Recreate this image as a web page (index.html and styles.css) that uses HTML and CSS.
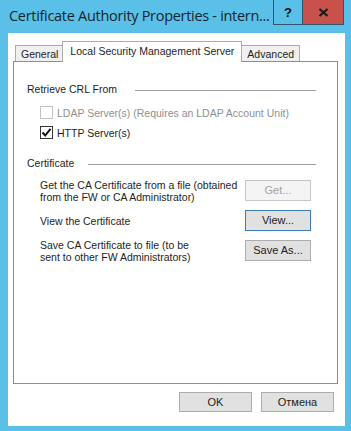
FILE: index.html
```html
<!DOCTYPE html>
<html lang="en">
  <head>
    <meta charset="UTF-8" />
    <title>Certificate Authority Properties</title>
    <link rel="stylesheet" href="styles.css">
  </head>
  <body>
    <div class="window">
      <div class="titlebar">
        <div class="title">Certificate Authority Properties - intern...</div>
        <div class="controls">
          <div class="ctl help">?</div>
          <div class="ctl close">
            <svg width="11" height="9" viewBox="0 0 11 9">
              <path d="M1.5 1 L9.5 8 M9.5 1 L1.5 8" stroke="#1b1b1b" stroke-width="2.2" fill="none" />
            </svg>
          </div>
        </div>
      </div>

      <div class="client">
        <div class="tabs">
          <div class="tab">General</div>
          <div class="tab active">Local Security Management Server</div>
          <div class="tab">Advanced</div>
        </div>
        <div class="panel">
          <div class="legend"><span>Retrieve CRL From</span><i></i></div>
          <div class="check-row disabled">
            <span class="box"></span>
            <span>LDAP Server(s) (Requires an LDAP Account Unit)</span>
          </div>
          <div class="check-row">
            <span class="box">
              <svg width="11" height="11" viewBox="0 0 11 11">
                <path d="M1.5 5.5 L4.2 8.5 L9.5 1.8" stroke="#111" stroke-width="2" fill="none" />
              </svg>
            </span>
            <span>HTTP Server(s)</span>
          </div>

          <div class="legend cert"><span>Certificate</span><i></i></div>
          <div class="cert-row first">
            <div class="cert-text">Get the CA Certificate from a file (obtained<br>from the FW or CA Administrator)</div>
            <button class="btn" disabled>Get...</button>
          </div>
          <div class="cert-row">
            <div class="cert-text">View the Certificate</div>
            <button class="btn default">View...</button>
          </div>
          <div class="cert-row">
            <div class="cert-text">Save CA Certificate to file (to be<br>sent to other FW Administrators)</div>
            <button class="btn">Save As...</button>
          </div>
        </div>
        <div class="footer">
          <button class="btn wide">OK</button>
          <button class="btn wide">Отмена</button>
        </div>
      </div>
    </div>
  </body>
</html>
```

FILE: styles.css
```css
body {
  margin: 0;
  padding: 0;
  background-color: #5bc0e8;
  font-family: "Liberation Sans", Arial, sans-serif;
  font-size: 10.5px;
  color: #1e1e1e;
}

.window {
  width: 351px;
  height: 431px;
  box-sizing: border-box;
  padding: 0 6px 5px 8px;
  display: flex;
  flex-direction: column;
  background-color: #5bc0e8;
}

.titlebar {
  height: 33px;
  display: flex;
  align-items: flex-start;
}

.title {
  flex: 1;
  min-width: 0;
  font-family: "Open Sans", sans-serif;
  font-size: 14.5px;
  color: #17262e;
  padding-top: 6px;
  padding-left: 1px;
  letter-spacing: -0.3px;
  white-space: nowrap;
}

.controls {
  display: flex;
  margin-right: 1px;
  border: 1px solid #33546a;
  border-top: none;
}

.ctl {
  height: 24px;
  display: flex;
  align-items: center;
  justify-content: center;
}

.help {
  width: 28px;
  border-right: 1px solid #33546a;
  font-family: "Liberation Sans", sans-serif;
  font-weight: bold;
  font-size: 13px;
  color: #111;
}

.close {
  width: 40px;
  background-color: #c9514b;
}

.client {
  flex: 1;
  background: #fff;
  padding: 8px 7px 0 5px;
  display: flex;
  flex-direction: column;
}

.tabs {
  display: flex;
  align-items: flex-end;
  height: 21px;
  margin-bottom: -1px;
  padding-left: 2px;
}

.tab {
  height: 16px;
  padding: 0 5px;
  line-height: 16px;
  background: #f0f0f0;
  border: 1px solid #adadad;
  border-bottom: none;
  margin-right: -1px;
}

.tab.active {
  height: 20px;
  line-height: 19px;
  padding: 0 7px;
  background: #fff;
  position: relative;
  z-index: 1;
  margin: 0 -1px 0 -1px;
}

.panel {
  height: 323px;
  border: 1px solid #8e8e8e;
  box-sizing: border-box;
  padding: 21px 21px 0 13px;
}

.legend {
  display: flex;
  align-items: center;
  height: 13px;
  line-height: 13px;
}

.legend i {
  flex: 1;
  border-top: 1px solid #a0a0a0;
  margin-left: 18px;
  margin-top: 2px;
}

.legend.cert {
  margin-top: 18px;
}

.legend.cert i {
  margin-left: 14px;
}

.check-row {
  display: flex;
  align-items: center;
  height: 13px;
  margin: 10px 0 0 13px;
  gap: 4px;
}

.check-row + .check-row {
  margin-top: 7px;
}

.box {
  width: 11px;
  height: 11px;
  border: 1px solid #333;
  display: flex;
  align-items: center;
  justify-content: center;
}

.check-row.disabled {
  color: #8f8f8f;
}

.check-row.disabled .box {
  border-color: #c4c4c4;
}

.cert-row {
  display: flex;
  justify-content: space-between;
  align-items: center;
  margin: 6px 5px 0 13px;
  height: 24px;
  line-height: 12px;
}

.cert-row.first {
  margin-top: 8px;
}

.cert-text {
  padding-top: 2px;
}

.btn {
  font-family: "Liberation Sans", Arial, sans-serif;
  font-size: 11px;
  width: 66px;
  height: 21px;
  padding: 0;
  background: #e1e1e1;
  border: 1px solid #adadad;
  color: #1e1e1e;
}

.btn:disabled {
  background: #f4f4f4;
  border-color: #c6c6c6;
  color: #a3a3a3;
}

.btn.default {
  border-color: #3c7fb1;
}

.footer {
  display: flex;
  justify-content: flex-end;
  gap: 9px;
  padding: 8px 4px 0 0;
}

.btn.wide {
  width: 73px;
  height: 20px;
}
```
